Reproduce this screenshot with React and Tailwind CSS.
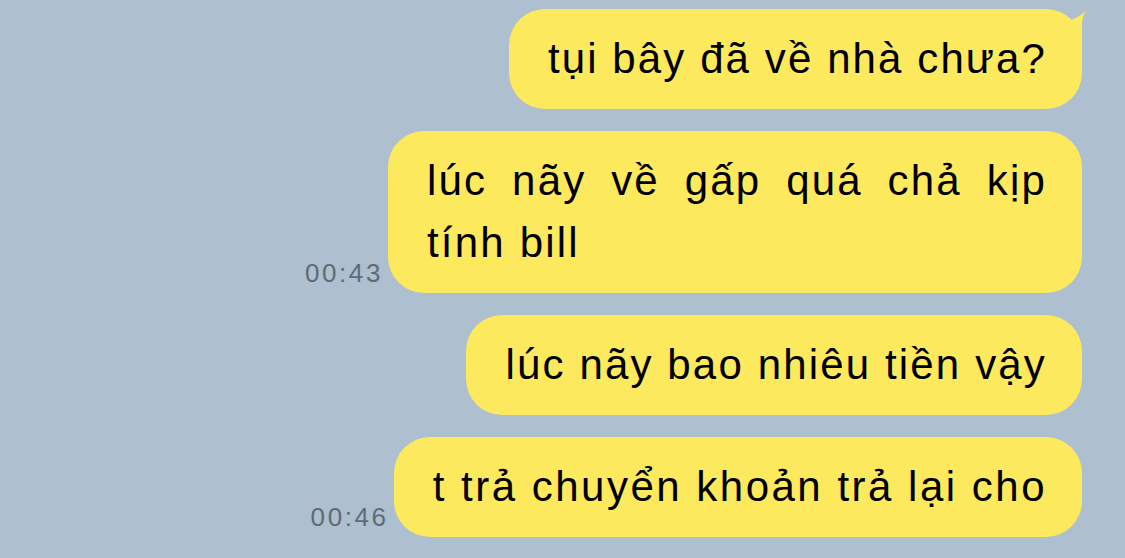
import React from 'react';

const messages = [
  { text: 'tụi bây đã về nhà chưa?', tail: true, track: 'tracking-[2.1px]' },
  { text: 'lúc nãy về gấp quá chả kịp tính bill', time: '00:43', wide: true, track: 'tracking-[2.2px]' },
  { text: 'lúc nãy bao nhiêu tiền vậy', track: 'tracking-[2.15px]' },
  { text: 't trả chuyển khoản trả lại cho', time: '00:46', track: 'tracking-[2.5px]' },
];

function Bubble({ msg }) {
  return (
    <div className="flex items-end gap-[5px]">
      {msg.time && (
        <span className="text-[26px] leading-none tracking-[2.6px] text-[#5e6b78] mb-[7px]">{msg.time}</span>
      )}
      <div
        className={
          'relative bg-[#fce95e] rounded-[36px] py-[19px] pl-[39px] pr-[35px] text-[42px] leading-[62px] text-black ' +
          msg.track +
          (msg.wide ? ' w-[694px] text-justify' : '')
        }
      >
        {msg.tail && (
          <svg className="absolute top-0 -right-[8px]" width="30" height="36" viewBox="0 0 30 36">
            <path d="M8 36 L8 12 Q18 9 27 1 Q22 6 22 16 L22 36 Z" fill="#fce95e" />
          </svg>
        )}
        <span className="relative">{msg.text}</span>
      </div>
    </div>
  );
}

export default function App() {
  return (
    <div
      className="w-[1125px] h-[558px] overflow-hidden bg-[#aebfcf] flex flex-col items-end gap-[22px] pt-[9px] pr-[43px]"
      style={{ fontFamily: '"Liberation Sans", Arial, sans-serif' }}
    >
      {messages.map((m, i) => (
        <Bubble key={i} msg={m} />
      ))}
    </div>
  );
}
